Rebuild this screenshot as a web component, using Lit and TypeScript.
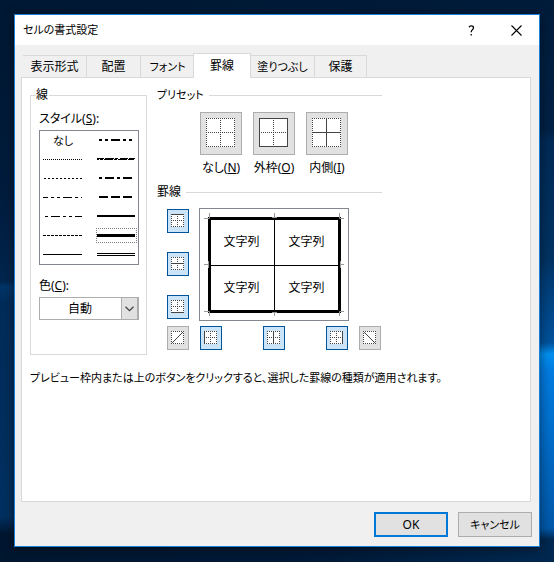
import { LitElement, html, svg, css } from "lit";
import { customElement, property, state } from "lit/decorators.js";
import { classMap } from "lit/directives/class-map.js";

const STYLES = [
  { id: "none", name: "なし" },
  { id: "hair", name: "極細の点線" },
  { id: "dotted", name: "点線" },
  { id: "dash-dot-dot", name: "二点鎖線" },
  { id: "dash-dot", name: "一点鎖線" },
  { id: "dashed", name: "破線" },
  { id: "thin", name: "細線" },
  { id: "medium-dash-dot-dot", name: "中太の二点鎖線" },
  { id: "slant", name: "斜め一点鎖線" },
  { id: "medium-dash-dot", name: "中太の一点鎖線" },
  { id: "medium-dashed", name: "中太の破線" },
  { id: "medium", name: "中太線" },
  { id: "thick", name: "太線" },
  { id: "double", name: "二重線" },
];

const TABS = [
  { name: "表示形式", look: "wide" },
  { name: "配置", look: "" },
  { name: "フォント", look: "kana" },
  { name: "罫線", look: "" },
  { name: "塗りつぶし", look: "wide kana" },
  { name: "保護", look: "narrow" },
];

/* Dash patterns of the single-stroke samples: thickness, start, end, dashes */
const SAMPLES: Record<string, [number, number, number, string]> = {
  hair: [1, 0, 39, "1 1"],
  dotted: [1, 1, 39, "2 2"],
  "dash-dot-dot": [1, 0, 39, "5 3 3 3 3 3 9 3 3 3"],
  "dash-dot": [1, 2, 39, "3 3 9 3 3 3"],
  dashed: [1, 0, 39, "3 1"],
  thin: [1, 0, 39, ""],
  "medium-dash-dot-dot": [2, 2, 36, "3 3 3 3 9 3 3 3 3 3"],
  "medium-dash-dot": [2, 2, 36, "3 3 9 3"],
  "medium-dashed": [2, 2, 36, "9 3"],
  medium: [2, 0, 38, ""],
  thick: [3, 0, 38, ""],
};

function sample(id: string) {
  if (id === "double") {
    return html`<svg class="sample" width="39" height="5" viewBox="0 0 39 5" aria-hidden="true">
      <path d="M0 1.5H38M0 3.5H38" stroke="#000" />
    </svg>`;
  }
  if (id === "slant") {
    return html`<svg class="sample" width="39" height="5" viewBox="0 0 39 5" aria-hidden="true">
      <path d="M0 1.5H7M8 1.5H17M18 1.5H21M23 1.5H31M32 1.5H38M0 2.5H2M3 2.5H6M7 2.5H16M17 2.5H20M21 2.5H30M31 2.5H37" stroke="#000" />
    </svg>`;
  }
  const [t, a, b, dash] = SAMPLES[id];
  const y = t === 2 ? 2 : 2.5;
  return html`<svg class="sample" width="39" height="5" viewBox="0 0 39 5" aria-hidden="true">
    <path d="M${a} ${y}H${b}" stroke="#000" stroke-width=${t} stroke-dasharray=${dash || "none"} />
  </svg>`;
}

/* A square cell diagram: dotted frame and cross, with some lines drawn solid */
@customElement("border-icon")
export class BorderIcon extends LitElement {
  @property({ type: Number }) size = 13;
  @property() solid = "";

  static styles = css`
    :host { display: block; line-height: 0; }
    svg { display: block; }
  `;

  render() {
    const n = this.size;
    const m = (n - 1) / 2 + 0.5;
    const e = n - 0.5;
    const on = this.solid.split(" ");
    const diagonal = on.includes("up") || on.includes("down");
    const lines: Record<string, string> = {
      top: `M0 .5H${n}`,
      bottom: `M0 ${e}H${n}`,
      left: `M.5 0V${n}`,
      right: `M${e} 0V${n}`,
      ...(diagonal ? {} : { middle: `M0 ${m}H${n}`, center: `M${m} 0V${n}` }),
    };
    return html`<svg width=${n} height=${n} viewBox="0 0 ${n} ${n}" fill="none" stroke="#444" aria-hidden="true">
      <rect width=${n} height=${n} fill="#fff" stroke="none" />
      ${Object.entries(lines).map(([k, d]) =>
        svg`<path d=${d} stroke-dasharray=${on.includes(k) ? "none" : "1 1"} />`)}
      ${on.includes("up") ? svg`<path d="M.5 ${e}L${e} .5" />` : ""}
      ${on.includes("down") ? svg`<path d="M.5 .5L${e} ${e}" />` : ""}
    </svg>`;
  }
}

@customElement("app-root")
export class AppRoot extends LitElement {
  @state() private lineStyle = "thick";
  @state() private tab = "罫線";
  @state() private edges = new Set(["top", "middle", "bottom", "left", "center", "right"]);

  static styles = css`
    * { box-sizing: border-box; }
    :host {
      display: flex;
      min-height: 100vh;
      padding: 14px 14px 15px;
      box-sizing: border-box;
      font: 12px/18px "Noto Sans", "Noto Sans CJK JP", sans-serif;
      font-feature-settings: "palt";
      color: #000;
      background:
        linear-gradient(90deg, #001730, #001a38 60%, #002850) bottom / 100% 15px no-repeat,
        linear-gradient(90deg, #001833, #001c3b) top / 100% 14px no-repeat,
        linear-gradient(180deg, #001c3b 0, #002145 23%, #002a55 25%, #003262 46%, #003c75 50%, #00529c 61%, #0090f0 63%, #007be0 66%, #0058a8 94%, #002850 96%) right / 14px 100% no-repeat,
        linear-gradient(180deg, #001833 0, #001c3d 34%, #00264d 50%, #003468 51%, #002c5a 54%, #003060 92%, #001630 95%) left / 14px 100% no-repeat,
        #001c3b;
    }
    button, select, input { font: inherit; font-feature-settings: inherit; color: inherit; margin: 0; }
    button { padding: 0; border-radius: 0; }
    .dialog {
      flex: 1;
      display: flex;
      flex-direction: column;
      min-width: 0;
      border: 1px solid #1a7fd8;
      background: #f0f0f0;
      box-shadow: 0 2px 10px rgba(0, 0, 0, 0.5);
    }
    .titlebar {
      display: flex;
      align-items: center;
      height: 30px;
      padding-left: 8px;
      background: #fff;
    }
    h1 { flex: 1; margin: 0; font: inherit; }
    .kana { font-size: 11px; }
    .caption {
      display: grid;
      place-items: center;
      width: 45px;
      height: 30px;
      border: 0;
      background: none;
    }
    .tabs {
      display: flex;
      align-items: flex-end;
      height: 24px;
      margin: 8px 8px 0;
    }
    .tab {
      height: 22px;
      width: 54px;
      border: 1px solid #d9d9d9;
      border-width: 1px 1px 0 0;
      background: #f0f0f0;
    }
    .tab.wide { width: 64px; }
    .tab.narrow { width: 52px; }
    .tab.active {
      position: relative;
      z-index: 1;
      width: 58px;
      height: 25px;
      margin: 0 0 -1px -2px;
      border-left-width: 1px;
      background: #fff;
    }
    .panel {
      flex: 1;
      margin: 0 8px 0 6px;
      padding: 8px;
      border: 1px solid #d9d9d9;
      background: #fff;
    }
    .columns { display: flex; gap: 10px; }
    fieldset { margin: 0; padding: 0; border: 0; min-width: 0; }
    .line-group {
      display: flex;
      flex-direction: column;
      width: 117px;
      height: 269px;
      padding: 6px 7px 0 8px;
      border: 1px solid #d9d9d9;
    }
    .line-group legend { padding: 0 1px 0 0; margin-left: -3px; }
    .styles {
      display: grid;
      grid-auto-flow: column;
      grid-template-rows: repeat(7, 19px);
      grid-template-columns: 46px 52px;
      border: 1px solid #828790;
      margin-top: 2px;
    }
    .style { position: relative; display: flex; align-items: center; padding-left: 3px; }
    .style.second { padding-left: 11px; }
    .style.text { padding-left: 13px; }
    .style input {
      position: absolute;
      inset: 0;
      appearance: none;
      cursor: pointer;
    }
    .style input:checked {
      inset: 2px 1px 2px 10px;
      border: 1px dotted #808080;
    }
    .sample { display: block; }
    .color-label { margin-top: 12px; }
    .combo { position: relative; display: flex; margin-top: 2px; }
    .combo select {
      flex: 1;
      height: 23px;
      padding: 0 0 0 28px;
      border: 1px solid #adadad;
      border-radius: 0;
      appearance: none;
      background: #fff;
    }
    .drop {
      position: absolute;
      right: 0;
      top: 0;
      display: grid;
      place-items: center;
      width: 18px;
      height: 23px;
      border: 1px solid #adadad;
      border-right-width: 2px;
      background: #e1e1e1;
      pointer-events: none;
    }
    .right { flex: 1; max-width: 225px; }
    .heading { display: flex; align-items: center; gap: 5px; width: 100%; padding: 0; }
    .heading::after { content: ""; flex: 1; height: 1px; background: #d9d9d9; }
    .presets { display: flex; gap: 11px; margin: 8px 0 6px 43px; }
    .preset { display: flex; flex-direction: column; align-items: center; gap: 4px; width: 42px; white-space: nowrap; }
    .preset button {
      display: grid;
      place-items: start;
      width: 42px;
      height: 43px;
      padding: 5px;
      border: 1px solid #adadad;
      background: #e1e1e1;
    }
    .editor {
      display: grid;
      grid-template-columns: 22px 150px 22px;
      gap: 5px 10px;
      margin: 7px 0 0 10px;
    }
    .side { display: flex; flex-direction: column; justify-content: space-between; padding: 1px 0 2px; }
    .below { display: flex; justify-content: space-between; padding: 0 1px; }
    .edge {
      display: grid;
      place-items: start;
      width: 22px;
      height: 24px;
      padding: 4px 3px;
      border: 1px solid #adadad;
      background: #e1e1e1;
    }
    .edge.on { border-color: #005499; background: #cce4f7; }
    .preview { display: grid; height: 113px; border: 1px solid #828790; }
    .preview > * { grid-area: 1 / 1; }
    .preview svg { display: block; }
    .cells {
      display: grid;
      grid-template: 46px 46px / 65px 65px;
      place-content: center;
      place-items: center;
    }
    .hint { margin: 14px 0 0; }
    .actions { display: flex; justify-content: flex-end; gap: 10px; padding: 10px 7px 9px; }
    .action {
      width: 74px;
      height: 25px;
      border: 1px solid #adadad;
      background: #e1e1e1;
    }
    .action.default { border: 2px solid #0078d7; }
    h1.kana, .tab.kana, .action.kana { font-size: 11px; }
  `;

  private toggle(edge: string) {
    const next = new Set(this.edges);
    if (!next.delete(edge)) next.add(edge);
    this.edges = next;
  }

  private edgeButton(edge: string, label: string) {
    const on = this.edges.has(edge);
    return html`<button class=${classMap({ edge: true, on })} aria-label=${label} aria-pressed=${on}
      @click=${() => this.toggle(edge)}><border-icon solid=${edge}></border-icon></button>`;
  }

  private preset(id: string, name: string, key: string, solid: string) {
    return html`<div class="preset">
      <button id=${id} aria-labelledby="${id}-label"><border-icon size="29" solid=${solid}></border-icon></button>
      <label id="${id}-label" for=${id}>${name}(<u>${key}</u>)</label>
    </div>`;
  }

  private preview() {
    const e = this.edges;
    return html`<div class="preview">
      <svg width="148" height="111" viewBox="0 0 148 111" fill="none" stroke="#000" aria-hidden="true">
        ${e.has("middle") ? svg`<path d="M8 56.5H141" />` : ""}
        ${e.has("center") ? svg`<path d="M74.5 8V104" />` : ""}
        ${e.has("top") ? svg`<path d="M8 9.5H141" stroke-width="3" />` : ""}
        ${e.has("bottom") ? svg`<path d="M8 102.5H141" stroke-width="3" />` : ""}
        ${e.has("left") ? svg`<path d="M9.5 8V104" stroke-width="3" />` : ""}
        ${e.has("right") ? svg`<path d="M139.5 8V104" stroke-width="3" />` : ""}
        <path stroke="#999" d="M4 9.5H9.5V4M4 55.5H8.5M8.5 52V59M4 102.5H9.5V107M74.5 4V8.5M72 8.5H77M74.5 107V103.5M72 103.5H77M144 9.5H139.5V4M144 55.5H140.5M140.5 52V59M144 102.5H139.5V107" />
      </svg>
      <div class="cells"><span>文字列</span><span>文字列</span><span>文字列</span><span>文字列</span></div>
    </div>`;
  }

  render() {
    return html`<div class="dialog" role="dialog" aria-labelledby="title">
      <header class="titlebar">
        <h1 id="title" class="kana">セルの書式設定</h1>
        <button class="caption" aria-label="ヘルプ">
          <svg width="7" height="11" viewBox="0 0 7 11" fill="none" stroke="#000" stroke-width="1.3" aria-hidden="true">
            <path d="M1 2.2C1.5 1 2.3 .8 3.2 .8C4.7 .8 5.5 1.5 5.5 2.7C5.5 4.6 3.2 4.8 3.2 7.3M3.2 9V10.5" />
          </svg>
        </button>
        <button class="caption" aria-label="閉じる">
          <svg width="11" height="11" viewBox="0 0 11 11" stroke="#000" stroke-width="1.1" aria-hidden="true">
            <path d="M.5 .5L10.5 10.5M10.5 .5L.5 10.5" />
          </svg>
        </button>
      </header>
      <div class="tabs" role="tablist">
        ${TABS.map((t) => html`<button role="tab" aria-selected=${t.name === this.tab}
          class="tab ${t.look} ${t.name === this.tab ? "active" : ""}"
          @click=${() => (this.tab = t.name)}>${t.name}</button>`)}
      </div>
      <main class="panel" role="tabpanel">
        <div class="columns">
          <fieldset class="line-group">
            <legend>線</legend>
            <span id="style-label">スタイル(<u>S</u>):</span>
            <div class="styles" role="radiogroup" aria-labelledby="style-label">
              ${STYLES.map((s, i) => html`<label
                class=${classMap({ style: true, second: i > 6, text: i === 0, kana: i === 0 })}>
                ${i === 0 ? s.name : sample(s.id)}
                <input type="radio" name="line" aria-label=${s.name} .checked=${s.id === this.lineStyle}
                  @change=${() => (this.lineStyle = s.id)} />
              </label>`)}
            </div>
            <label class="color-label" for="color">色(<u>C</u>):</label>
            <div class="combo">
              <select id="color"><option>自動</option></select>
              <span class="drop">
                <svg width="9" height="6" viewBox="0 0 9 6" fill="none" stroke="#444" stroke-width="1.3" aria-hidden="true">
                  <path d="M.5 .7L4.5 4.7L8.5 .7" />
                </svg>
              </span>
            </div>
          </fieldset>
          <div class="right">
            <fieldset>
              <legend class="heading kana">プリセット</legend>
              <div class="presets">
                ${this.preset("preset-none", "なし", "N", "")}
                ${this.preset("preset-outline", "外枠", "O", "top right bottom left")}
                ${this.preset("preset-inside", "内側", "I", "middle center")}
              </div>
            </fieldset>
            <fieldset>
              <legend class="heading">罫線</legend>
              <div class="editor">
                <div class="side">
                  ${this.edgeButton("top", "上罫線")}
                  ${this.edgeButton("middle", "横罫線")}
                  ${this.edgeButton("bottom", "下罫線")}
                </div>
                ${this.preview()}
                <span></span>
                ${this.edgeButton("up", "右上がり斜線")}
                <div class="below">
                  ${this.edgeButton("left", "左罫線")}
                  ${this.edgeButton("center", "縦罫線")}
                  ${this.edgeButton("right", "右罫線")}
                </div>
                ${this.edgeButton("down", "右下がり斜線")}
              </div>
            </fieldset>
          </div>
        </div>
        <p class="hint kana">プレビュー枠内または上のボタンをクリックすると、選択した罫線の種類が適用されます。</p>
      </main>
      <footer class="actions">
        <button class="action default">OK</button>
        <button class="action kana">キャンセル</button>
      </footer>
    </div>`;
  }
}
